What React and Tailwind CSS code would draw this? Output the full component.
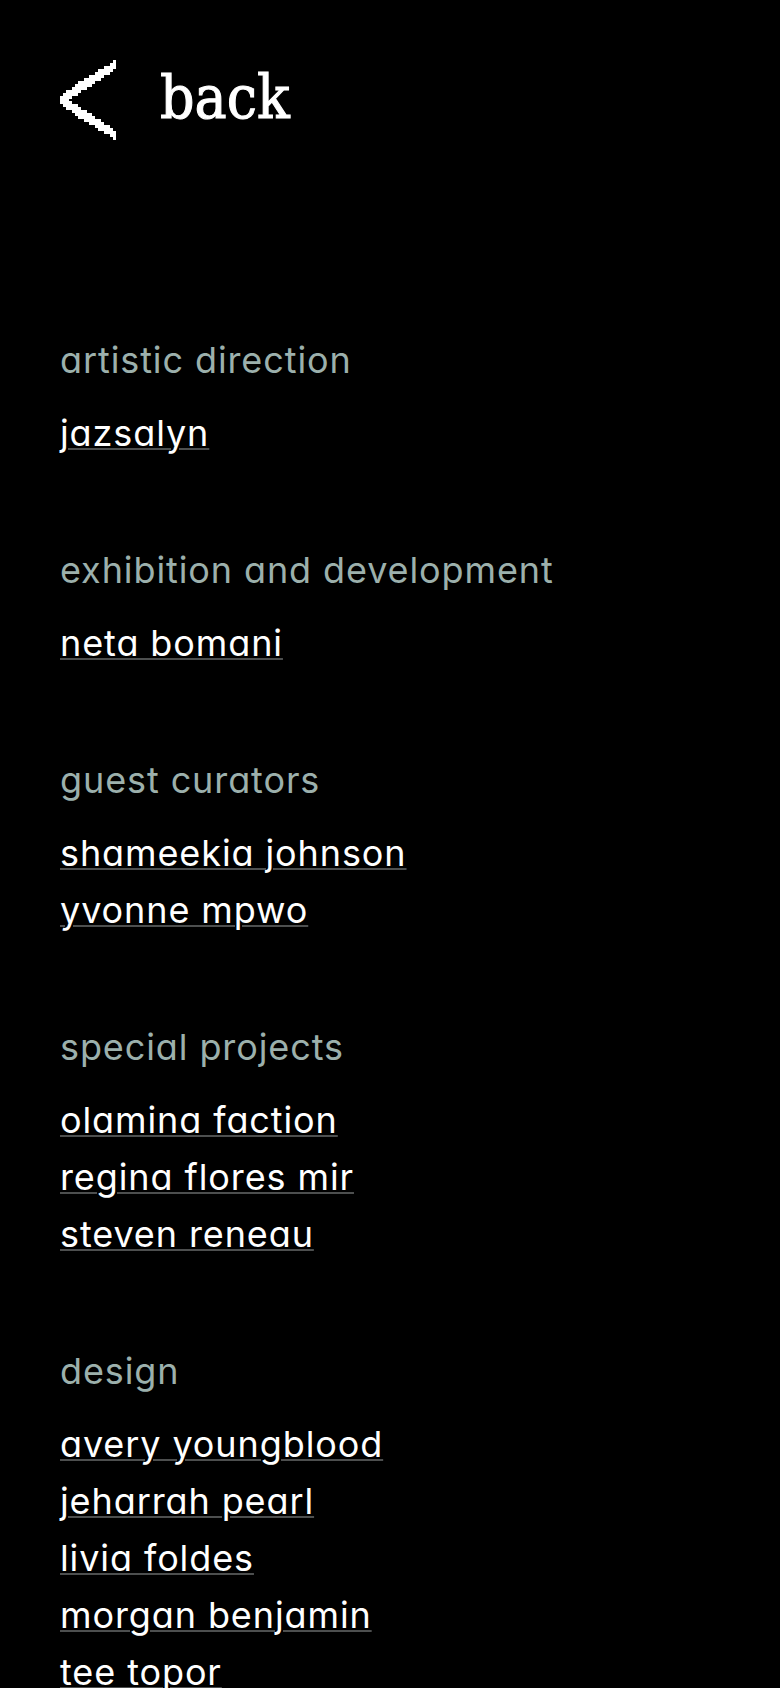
const SECTIONS = [
  { title: 'artistic direction', people: ['jazsalyn'] },
  { title: 'exhibition and development', people: ['neta bomani'] },
  { title: 'guest curators', people: ['shameekia johnson', 'yvonne mpwo'] },
  { title: 'special projects', people: ['olamina faction', 'regina flores mir', 'steven reneau'] },
  {
    title: 'design',
    people: ['avery youngblood', 'jeharrah pearl', 'livia foldes', 'morgan benjamin', 'tee topor'],
  },
]

// upper arm of the arrow, one pair per pixel row: [first column, column after the last]
const ARROW_ARM = [
  [18, 19], [17, 19], [15, 19], [13, 18], [12, 17], [10, 15], [8, 14],
  [6, 12], [5, 11], [4, 9], [2, 7], [1, 6], [0, 4],
]

// the lower arm mirrors the upper one around the tip
const ARROW_ROWS = [...ARROW_ARM, [0, 3], ...[...ARROW_ARM].reverse()]

function BackArrow() {
  return (
    <svg
      className="h-20 w-14 shrink-0"
      viewBox="0 0 19 27"
      preserveAspectRatio="none"
      fill="currentColor"
      shapeRendering="crispEdges"
      aria-hidden="true"
    >
      {ARROW_ROWS.map(([start, end], row) => (
        <rect key={row} x={start} y={row} width={end - start} height={1} />
      ))}
    </svg>
  )
}

function Section({ title, people }) {
  return (
    <section>
      <h2 className="mb-4 text-[#9cb0ac]">{title}</h2>
      <ul>
        {people.map((name) => (
          <li key={name}>
            <a
              href="#"
              className="underline decoration-[#4d4f4f] decoration-2 underline-offset-2"
            >
              {name}
            </a>
          </li>
        ))}
      </ul>
    </section>
  )
}

export default function App() {
  return (
    <div className="h-screen overflow-hidden bg-black px-[60px] pt-[60px] text-white">
      <header>
        <a href="#" className="inline-flex items-start gap-11">
          <BackArrow />
          <span className="font-['DejaVu_Serif_Condensed','DejaVu_Serif',serif] text-[60px] leading-[74px] [-webkit-text-stroke:1px_white]">
            back
          </span>
        </a>
      </header>

      {/* cv11 is Inter's single-storey a */}
      <main className="mt-[186px] flex flex-col gap-20 font-['Inter',sans-serif] text-[36px] leading-[57px] tracking-wide [font-feature-settings:'cv11']">
        {SECTIONS.map((section) => (
          <Section key={section.title} {...section} />
        ))}
      </main>
    </div>
  )
}
